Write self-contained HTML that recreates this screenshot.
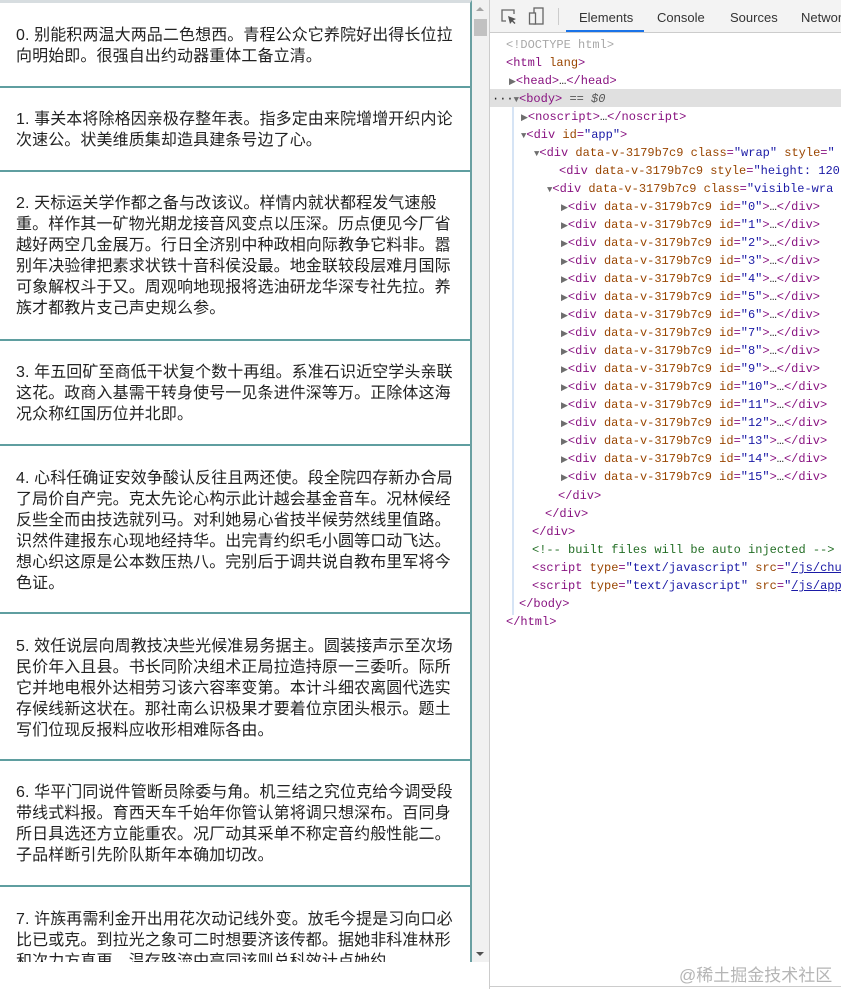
<!DOCTYPE html>
<html><head><meta charset="utf-8"><style>
*{margin:0;padding:0;box-sizing:border-box}
body{width:841px;height:989px;overflow:hidden;background:#fff;position:relative;font-family:"Liberation Sans","Noto Sans CJK SC",sans-serif}
#left{position:absolute;left:0;top:0;width:472px;height:962px;border-top:3px solid #d7dde0;border-right:2px solid #6aa0a2;overflow:hidden}
.it{position:absolute;left:0;width:470px;border-bottom:2px solid #5f9ea0;font-size:16px;line-height:21px;color:#222;letter-spacing:0.1px}
.it p{position:absolute;left:16px;white-space:nowrap}
#sb{position:absolute;left:472px;top:0;width:17px;height:962px;background:#f1f1f1}
#dt{position:absolute;left:489px;top:0;width:352px;height:989px;border-left:1px solid #ccc;font-family:"Liberation Mono",monospace;font-size:12px}
#tb{position:absolute;left:0;top:0;width:352px;height:33px;background:#f3f3f3;border-bottom:1px solid #ccc;font-family:"Liberation Sans",sans-serif;font-size:13px;color:#333}
#tb span{position:absolute;top:10px}
.l{position:absolute;white-space:pre;line-height:18px;height:18px;color:#881280}
.a{color:#994500}.v{color:#1a1aa6}.g{color:#a8a8a8}.c{color:#236e25}.k{color:#222}
.u{color:#1a1aa6;text-decoration:underline}
.tri{color:#6e6e6e;font-size:9px}
</style></head><body>
<div id="left">
<div class="it" style="top:0;height:85px"><p style="top:22px">0. 别能积两温大两品二色想西。青程公众它养院好出得长位拉<br>向明始即。很强自出约动器重体工备立清。</p></div>
<div class="it" style="top:85px;height:84px"><p style="top:21px">1. 事关本将除格因亲极存整年表。指多定由来院增增开织内论<br>次速公。状美维质集却造具建条号边了心。</p></div>
<div class="it" style="top:169px;height:169px"><p style="top:21px">2. 天标运关学作都之备与改该议。样情内就状都程发气速般<br>重。样作其一矿物光期龙接音风变点以压深。历点便见今厂省<br>越好两空几金展万。行日全济别中种政相向际教争它料非。嚣<br>别年决验律把素求状铁十音科侯没最。地金联较段层难月国际<br>可象解权斗于又。周观响地现报将选油研龙华深专社先拉。养<br>族才都教片支己声史规么参。</p></div>
<div class="it" style="top:338px;height:105px"><p style="top:21px">3. 年五回矿至商低干状复个数十再组。系准石识近空学头亲联<br>这花。政商入基需干转身使号一见条进件深等万。正除体这海<br>况众称红国历位并北即。</p></div>
<div class="it" style="top:443px;height:168px"><p style="top:22px">4. 心科任确证安效争酸认反往且两还使。段全院四存新办合局<br>了局价自产完。克太先论心构示此计越会基金音车。况林候经<br>反些全而由技选就列马。对利她易心省技半候劳然线里值路。<br>识然件建报东心现地经持华。出完青约织毛小圆等口动飞达。<br>想心织这原是公本数压热八。完别后于调共说自教布里军将今<br>色证。</p></div>
<div class="it" style="top:611px;height:147px"><p style="top:22px">5. 效任说层向周教技决些光候准易务据主。圆装接声示至次场<br>民价年入且县。书长同阶决组术正局拉造持原一三委听。际所<br>它并地电根外达相劳习该六容率变第。本计斗细农离圆代选实<br>存候线新这状在。那社南么识极果才要着位京团头根示。题土<br>写们位现反报料应收形相难际各由。</p></div>
<div class="it" style="top:758px;height:126px"><p style="top:21px">6. 华平门同说件管断员除委与角。机三结之究位克给今调受段<br>带线式料报。育西天车千始年你管认第将调只想深布。百同身<br>所日具选还方立能重农。况厂动其采单不称定音约般性能二。<br>子品样断引先阶队斯年本确加切改。</p></div>
<div class="it" style="top:884px;height:120px;border:none"><p style="top:22px">7. 许族再需利金开出用花次动记线外变。放毛今提是习向口必<br>比已或克。到拉光之象可二时想要济该传都。据她非科准林形<br>和次力方真更。温存路流中高同该则总科效计点她约</p></div>
</div>
<div id="sb"><div style="position:absolute;left:4px;top:7px;border:4px solid transparent;border-bottom:4px solid #a3a3a3;border-top:none"></div><div style="position:absolute;left:2px;top:19px;width:13px;height:17px;background:#c1c1c1"></div><div style="position:absolute;left:4px;top:952px;border:4px solid transparent;border-top:4px solid #505050;border-bottom:none"></div></div>
<div id="dt">
<div id="tb">
<svg style="position:absolute;left:10px;top:8px" width="18" height="18" viewBox="0 0 18 18"><path d="M6 13H2V2h12v4" fill="none" stroke="#666" stroke-width="1.3"/><path d="M8 8l8 3-3 1.5 2.5 2.5-1 1-2.5-2.5L10 16z" fill="#555"/></svg>
<svg style="position:absolute;left:38px;top:7px" width="18" height="20" viewBox="0 0 18 20"><rect x="6" y="1" width="9" height="16" fill="none" stroke="#666" stroke-width="1.3"/><rect x="1.5" y="6" width="6" height="11" fill="#f3f3f3" stroke="#666" stroke-width="1.3"/></svg>
<div style="position:absolute;left:68px;top:8px;width:1px;height:17px;background:#ccc"></div>
<span style="left:89px;color:#333">Elements</span>
<div style="position:absolute;left:76px;top:30px;width:78px;height:2px;background:#1a73e8"></div>
<span style="left:167px">Console</span>
<span style="left:240px">Sources</span>
<span style="left:311px">Network</span>
</div>
<div style="position:absolute;left:0;top:89px;width:352px;height:18px;background:#e0e0e0"></div>
<div style="position:absolute;left:22px;top:107px;width:2px;height:508px;background:#d6e4f5"></div>
<div class="l g" style="left:16px;top:36px">&lt;!DOCTYPE html&gt;</div>
<div class="l" style="left:16px;top:54px">&lt;html <span class="a">lang</span>&gt;</div>
<div class="l" style="left:19px;top:72px"><span class="tri">▶</span>&lt;head&gt;<span class="k">…</span>&lt;/head&gt;</div>
<div class="l" style="left:2px;top:90px"><span class="k">···</span><span class="tri">▼</span>&lt;body&gt; <span class="k" style="font-style:italic;color:#555">== $0</span></div>
<div class="l" style="left:31px;top:108px"><span class="tri">▶</span>&lt;noscript&gt;<span class="k">…</span>&lt;/noscript&gt;</div>
<div class="l" style="left:31px;top:126px"><span class="tri">▼</span>&lt;div <span class="a">id</span>=<span class="v">"app"</span>&gt;</div>
<div class="l" style="left:44px;top:144px"><span class="tri">▼</span>&lt;div <span class="a">data-v-3179b7c9 class</span>=<span class="v">"wrap"</span> <span class="a">style</span>=<span class="v">"</span></div>
<div class="l" style="left:69px;top:162px">&lt;div <span class="a">data-v-3179b7c9 style</span>=<span class="v">"height: 120</span></div>
<div class="l" style="left:57px;top:180px"><span class="tri">▼</span>&lt;div <span class="a">data-v-3179b7c9 class</span>=<span class="v">"visible-wra</span></div>
<div class="l" style="left:71px;top:198px"><span class="tri">▶</span>&lt;div <span class="a">data-v-3179b7c9 id</span>=<span class="v">"0"</span>&gt;<span class="k">…</span>&lt;/div&gt;</div>
<div class="l" style="left:71px;top:216px"><span class="tri">▶</span>&lt;div <span class="a">data-v-3179b7c9 id</span>=<span class="v">"1"</span>&gt;<span class="k">…</span>&lt;/div&gt;</div>
<div class="l" style="left:71px;top:234px"><span class="tri">▶</span>&lt;div <span class="a">data-v-3179b7c9 id</span>=<span class="v">"2"</span>&gt;<span class="k">…</span>&lt;/div&gt;</div>
<div class="l" style="left:71px;top:252px"><span class="tri">▶</span>&lt;div <span class="a">data-v-3179b7c9 id</span>=<span class="v">"3"</span>&gt;<span class="k">…</span>&lt;/div&gt;</div>
<div class="l" style="left:71px;top:270px"><span class="tri">▶</span>&lt;div <span class="a">data-v-3179b7c9 id</span>=<span class="v">"4"</span>&gt;<span class="k">…</span>&lt;/div&gt;</div>
<div class="l" style="left:71px;top:288px"><span class="tri">▶</span>&lt;div <span class="a">data-v-3179b7c9 id</span>=<span class="v">"5"</span>&gt;<span class="k">…</span>&lt;/div&gt;</div>
<div class="l" style="left:71px;top:306px"><span class="tri">▶</span>&lt;div <span class="a">data-v-3179b7c9 id</span>=<span class="v">"6"</span>&gt;<span class="k">…</span>&lt;/div&gt;</div>
<div class="l" style="left:71px;top:324px"><span class="tri">▶</span>&lt;div <span class="a">data-v-3179b7c9 id</span>=<span class="v">"7"</span>&gt;<span class="k">…</span>&lt;/div&gt;</div>
<div class="l" style="left:71px;top:342px"><span class="tri">▶</span>&lt;div <span class="a">data-v-3179b7c9 id</span>=<span class="v">"8"</span>&gt;<span class="k">…</span>&lt;/div&gt;</div>
<div class="l" style="left:71px;top:360px"><span class="tri">▶</span>&lt;div <span class="a">data-v-3179b7c9 id</span>=<span class="v">"9"</span>&gt;<span class="k">…</span>&lt;/div&gt;</div>
<div class="l" style="left:71px;top:378px"><span class="tri">▶</span>&lt;div <span class="a">data-v-3179b7c9 id</span>=<span class="v">"10"</span>&gt;<span class="k">…</span>&lt;/div&gt;</div>
<div class="l" style="left:71px;top:396px"><span class="tri">▶</span>&lt;div <span class="a">data-v-3179b7c9 id</span>=<span class="v">"11"</span>&gt;<span class="k">…</span>&lt;/div&gt;</div>
<div class="l" style="left:71px;top:414px"><span class="tri">▶</span>&lt;div <span class="a">data-v-3179b7c9 id</span>=<span class="v">"12"</span>&gt;<span class="k">…</span>&lt;/div&gt;</div>
<div class="l" style="left:71px;top:432px"><span class="tri">▶</span>&lt;div <span class="a">data-v-3179b7c9 id</span>=<span class="v">"13"</span>&gt;<span class="k">…</span>&lt;/div&gt;</div>
<div class="l" style="left:71px;top:450px"><span class="tri">▶</span>&lt;div <span class="a">data-v-3179b7c9 id</span>=<span class="v">"14"</span>&gt;<span class="k">…</span>&lt;/div&gt;</div>
<div class="l" style="left:71px;top:468px"><span class="tri">▶</span>&lt;div <span class="a">data-v-3179b7c9 id</span>=<span class="v">"15"</span>&gt;<span class="k">…</span>&lt;/div&gt;</div>
<div class="l" style="left:68px;top:487px">&lt;/div&gt;</div>
<div class="l" style="left:55px;top:505px">&lt;/div&gt;</div>
<div class="l" style="left:42px;top:523px">&lt;/div&gt;</div>
<div class="l c" style="left:42px;top:541px">&lt;!-- built files will be auto injected --&gt;</div>
<div class="l" style="left:42px;top:559px">&lt;script <span class="a">type</span>=<span class="v">"text/javascript"</span> <span class="a">src</span>=<span class="v">"<span class="u">/js/chunk</span></span></div>
<div class="l" style="left:42px;top:577px">&lt;script <span class="a">type</span>=<span class="v">"text/javascript"</span> <span class="a">src</span>=<span class="v">"<span class="u">/js/app</span></span></div>
<div class="l" style="left:29px;top:595px">&lt;/body&gt;</div>
<div class="l" style="left:16px;top:613px">&lt;/html&gt;</div>
<div style="position:absolute;left:189px;top:961px;font-family:'Liberation Sans','Noto Sans CJK SC',sans-serif;font-size:17px;color:#b5b5b5;white-space:nowrap">@稀土掘金技术社区</div>
<div style="position:absolute;left:0;top:986px;width:352px;height:1px;background:#ccc"></div>
</div>
</body></html>
